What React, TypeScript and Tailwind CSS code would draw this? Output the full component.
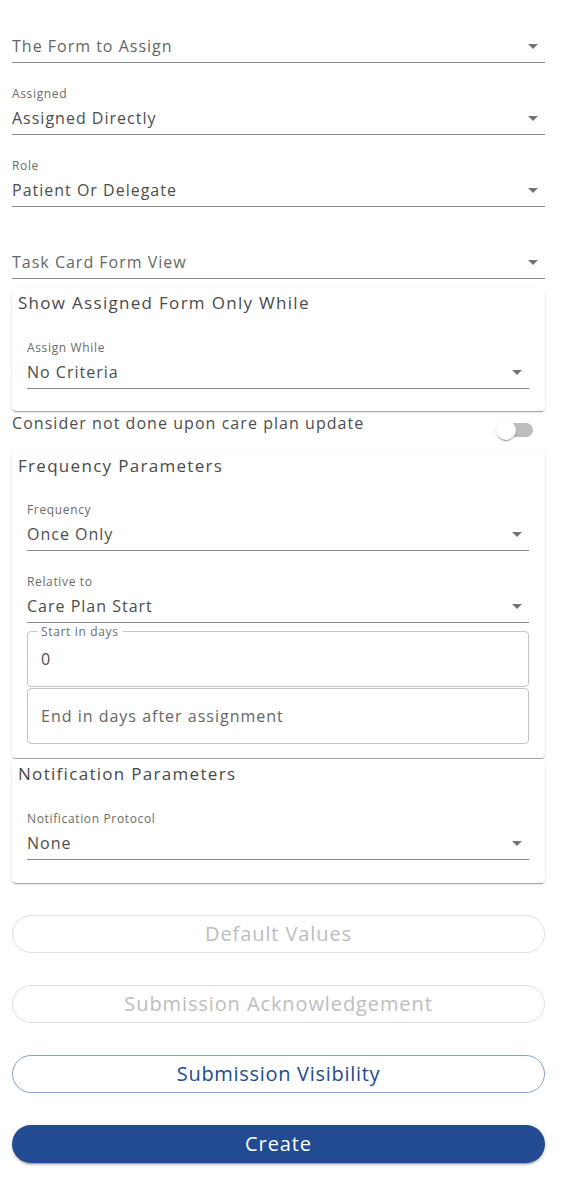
const font = { fontFamily: '"Open Sans", "Liberation Sans", sans-serif' }

function Arrow() {
  return (
    <svg width="10" height="5" viewBox="0 0 10 5" className="shrink-0">
      <path d="M0 0 L10 0 L5 5 Z" fill="#757575" />
    </svg>
  )
}

function SelectField({ label, value, placeholder }: { label?: string; value?: string; placeholder?: string }) {
  return (
    <div className="border-b border-[#8a8a8a] pb-1">
      <div className="h-4 text-[12px] leading-4 text-[#6b6b6b] tracking-[0.65px]">{label}</div>
      <div className="mt-1 flex h-6 items-center justify-between pr-[7px]">
        <span className={`text-[16px] tracking-[1px] ${value ? 'text-[#4d4d4d]' : 'text-[#666666]'}`}>
          {value ?? placeholder}
        </span>
        <Arrow />
      </div>
    </div>
  )
}

function Card({ title, children, className }: { title: string; children: React.ReactNode; className?: string }) {
  return (
    <div
      className={`rounded bg-white shadow-[0_2px_1px_-1px_rgba(0,0,0,0.2),0_1px_1px_0_rgba(0,0,0,0.14),0_1px_3px_0_rgba(0,0,0,0.12)] ${className ?? ''}`}
    >
      <div className="px-[6px] pt-[4px] text-[17px] leading-[22px] font-medium text-[#4a4a4a] tracking-[1.3px]">{title}</div>
      <div className="pl-[15px] pr-[16px]">{children}</div>
    </div>
  )
}

function OutlinedInput({ label, value, placeholder }: { label?: string; value?: string; placeholder?: string }) {
  return (
    <div className="relative flex h-[56px] items-center rounded border border-[#c4c4c4] px-[13px]">
      {label && (
        <span className="absolute -top-[8px] left-[9px] bg-white px-[4px] text-[12px] leading-4 text-[#6b6b6b] tracking-[0.65px]">
          {label}
        </span>
      )}
      <span className={`text-[16px] tracking-[1px] ${value ? 'text-[#4d4d4d]' : 'text-[#666666]'}`}>
        {value ?? placeholder}
      </span>
    </div>
  )
}

export default function App() {
  return (
    <div className="min-h-[1178px] bg-white pl-3 pr-[17px] pt-[14px]" style={font}>
      <SelectField placeholder="The Form to Assign" />
      <div className="mt-[23px]">
        <SelectField label="Assigned" value="Assigned Directly" />
      </div>
      <div className="mt-[23px]">
        <SelectField label="Role" value="Patient Or Delegate" />
      </div>
      <div className="mt-[23px]">
        <SelectField placeholder="Task Card Form View" />
      </div>

      {/* Show assigned form only while */}
      <Card title="Show Assigned Form Only While" className="mt-[9px] pb-[22px]">
        <div className="mt-[26px]">
          <SelectField label="Assign While" value="No Criteria" />
        </div>
      </Card>

      {/* toggle row */}
      <div className="flex h-[40px] justify-between">
        <span className="text-[16px] leading-6 text-[#4d4d4d] tracking-[1.05px]">Consider not done upon care plan update</span>
        <div className="relative h-[38px] w-[58px] shrink-0">
          <div className="absolute left-[12px] top-[12px] h-[14px] w-[34px] rounded-full bg-[#bdbdbd]" />
          <div className="absolute left-[9px] top-[9px] h-5 w-5 rounded-full bg-white shadow-[0_2px_1px_-1px_rgba(0,0,0,0.2),0_1px_1px_0_rgba(0,0,0,0.14),0_1px_3px_0_rgba(0,0,0,0.12)]" />
        </div>
      </div>

      {/* Frequency */}
      <Card title="Frequency Parameters" className="pb-[14px]">
        <div className="mt-[25px]">
          <SelectField label="Frequency" value="Once Only" />
        </div>
        <div className="mt-[23px]">
          <SelectField label="Relative to" value="Care Plan Start" />
        </div>
        <div className="mt-[8px]">
          <OutlinedInput label="Start in days" value="0" />
        </div>
        <div className="mt-[1px]">
          <OutlinedInput placeholder="End in days after assignment" />
        </div>
      </Card>

      {/* Notification */}
      <Card title="Notification Parameters" className="mt-[1px] pb-[23px]">
        <div className="mt-[26px]">
          <SelectField label="Notification Protocol" value="None" />
        </div>
      </Card>

      {/* buttons */}
      <div className="mt-8 flex flex-col gap-8">
        <button className="h-[38px] w-full rounded-full border border-[#e0e0e0] text-[20px] text-[#bdbdbd] tracking-[0.9px]">
          Default Values
        </button>
        <button className="h-[38px] w-full rounded-full border border-[#e0e0e0] text-[20px] text-[#bdbdbd] tracking-[0.9px]">
          Submission Acknowledgement
        </button>
        <button className="h-[38px] w-full rounded-full border border-[#8aa0cc] text-[20px] text-[#224b91] tracking-[0.7px]">
          Submission Visibility
        </button>
        <button className="h-[38px] w-full rounded-full bg-[#234b91] text-[20px] text-white tracking-[0.9px] shadow-[0_3px_1px_-2px_rgba(0,0,0,0.2),0_2px_2px_0_rgba(0,0,0,0.14),0_1px_5px_0_rgba(0,0,0,0.12)]">
          Create
        </button>
      </div>
    </div>
  )
}
